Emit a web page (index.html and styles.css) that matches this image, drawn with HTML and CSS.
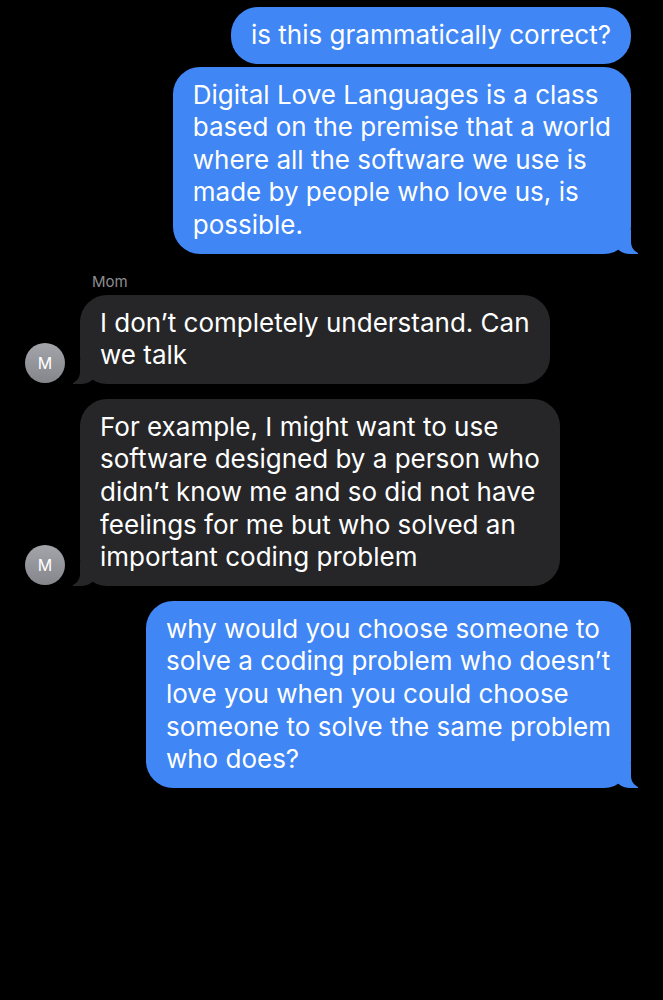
FILE: index.html
```html
<!DOCTYPE html>
<html lang="en">

<head>
    <meta charset="UTF-8">
    <meta name="viewport" content="width=device-width, initial-scale=1.0">
    <title>Messages</title>
    <link rel="stylesheet" href="styles.css">
</head>

<body>
    <div class="thread">
        <div class="row sent">
            <p class="bubble blue">is this grammatically correct?</p>
        </div>
        <div class="row sent tight">
            <p class="bubble blue tail">Digital Love Languages is a class<br>based on the premise that a world<br>where all the software we use is<br>made by people who love us, is<br>possible.</p>
        </div>

        <p class="sender">Mom</p>
        <div class="row received tight">
            <div class="avatar">M</div>
            <p class="bubble gray tail">I don’t completely understand. Can<br>we talk</p>
        </div>
        <div class="row received">
            <div class="avatar">M</div>
            <p class="bubble gray tail">For example, I might want to use<br>software designed by a person who<br>didn’t know me and so did not have<br>feelings for me but who solved an<br>important coding problem</p>
        </div>

        <div class="row sent">
            <p class="bubble blue tail">why would you choose someone to<br>solve a coding problem who doesn’t<br>love you when you could choose<br>someone to solve the same problem<br>who does?</p>
        </div>
    </div>
</body>

</html>
```

FILE: styles.css
```css
* {
    padding: 0;
    margin: 0;
    box-sizing: border-box;
}

html,
body {
    height: 100%;
    width: 100%;
    background-color: #000;
}

.thread {
    display: flex;
    flex-direction: column;
    padding: 7px 32px 0 25px;
    font-family: Inter, "Liberation Sans", sans-serif;
}

.row {
    display: flex;
    margin-top: 15px;
}

.row:first-child {
    margin-top: 0;
}

.row.tight {
    margin-top: 3px;
}

.sent {
    justify-content: flex-end;
}

.received {
    align-items: flex-end;
    gap: 15px;
}

.sender {
    margin: 18px 0 0 67px;
    font-size: 15px;
    line-height: 20px;
    color: #8d8d92;
}

.bubble {
    position: relative;
    max-width: 500px;
    padding: 12px 20px 12px 20px;
    border-radius: 27px;
    font-size: 26px;
    line-height: 32.6px;
    color: #fff;
    white-space: nowrap;
}

.blue {
    background-color: #4086f5;
}

.gray {
    background-color: #262628;
}

/* little tails at the bottom corner */
.tail::before,
.tail::after {
    content: "";
    position: absolute;
    bottom: 0;
    height: 24px;
}

.blue.tail::before {
    right: -7px;
    width: 24px;
    background-color: #4086f5;
    border-bottom-left-radius: 16px 14px;
}

.blue.tail::after {
    right: -26px;
    width: 26px;
    background-color: #000;
    border-bottom-left-radius: 12px;
}

.gray.tail::before {
    left: -7px;
    width: 24px;
    background-color: #262628;
    border-bottom-right-radius: 16px 14px;
}

.gray.tail::after {
    left: -26px;
    width: 26px;
    background-color: #000;
    border-bottom-right-radius: 12px;
}

.avatar {
    position: relative;
    z-index: 1;
    flex-shrink: 0;
    width: 40px;
    height: 40px;
    margin-bottom: 1px;
    border-radius: 50%;
    background-image: linear-gradient(#a4a4ab, #85858c);
    color: #fff;
    font-size: 16px;
    line-height: 40px;
    text-align: center;
}
```
